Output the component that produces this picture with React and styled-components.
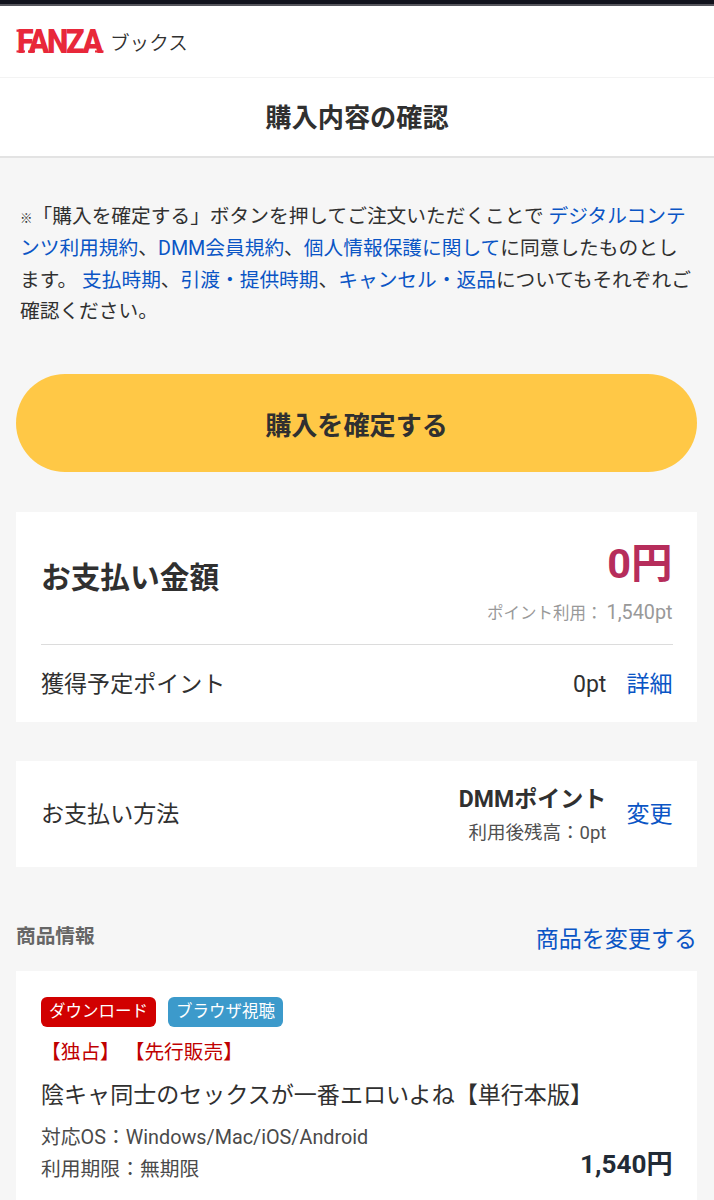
import React from 'react'
import styled, { createGlobalStyle } from 'styled-components'

const badges = [
    { id: 1, title: 'ダウンロード', color: '#d10000' },
    { id: 2, title: 'ブラウザ視聴', color: '#3c9acb' }
]

function Header(){
    return (
        <HeaderStyled>
            <svg className="logo" width="90" height="44" viewBox="0 0 90 44">
                <text x="1" y="33.5" textLength="84" lengthAdjust="spacingAndGlyphs">FANZA</text>
                <rect x="0.5" y="10.5" width="5" height="2.3" />
                <rect x="0.5" y="31.4" width="8.5" height="2.1" />
                <rect x="12" y="31.4" width="7" height="2.1" />
                <rect x="79" y="31.4" width="8.5" height="2.1" />
            </svg>
            <span>ブックス</span>
        </HeaderStyled>
    )
}

function Payment(){
    return (
        <Card $height={209.5}>
            <TotalRow>
                <h2>お支払い金額</h2>
                <div className="price">
                    <strong>0円</strong>
                    <p>ポイント利用： <span>1,540pt</span></p>
                </div>
            </TotalRow>
            <Row $height={79}>
                <span>獲得予定ポイント</span>
                <RowEnd>
                    <span>0pt</span>
                    <Link>詳細</Link>
                </RowEnd>
            </Row>
        </Card>
    )
}

function Method(){
    return (
        <Card $height={106}>
            <Row $height={108}>
                <span>お支払い方法</span>
                <RowEnd>
                    <MethodStyled>
                        <strong>DMMポイント</strong>
                        <span>利用後残高：0pt</span>
                    </MethodStyled>
                    <Link>変更</Link>
                </RowEnd>
            </Row>
        </Card>
    )
}

function Product(){
    return (
        <Card $height={229}>
            <Badges>
                {badges.map((badge) => {
                    return <Badge key={badge.id} $color={badge.color}>{badge.title}</Badge>
                })}
            </Badges>
            <Campaign>【独占】 【先行販売】</Campaign>
            <ProductTitle>陰キャ同士のセックスが一番エロいよね【単行本版】</ProductTitle>
            <Detail>
                <div>
                    <p>対応OS：Windows/Mac/iOS/Android</p>
                    <p>利用期限：無期限</p>
                </div>
                <strong>1,540円</strong>
            </Detail>
        </Card>
    )
}

function App(){

    return (
        <>
            <GlobalStyle />
            <StatusBar />
            <Header />
            <PageTitle>購入内容の確認</PageTitle>
            <Main>
                <Notice>
                    <span className="mark">※</span>「購入を確定する」ボタンを押してご注文いただくことで <Link>デジタルコンテンツ利用規約</Link>、<Link>DMM会員規約</Link>、<Link>個人情報保護に関して</Link>に同意したものとします。 <Link>支払時期</Link>、<Link>引渡・提供時期</Link>、<Link>キャンセル・返品</Link>についてもそれぞれご確認ください。
                </Notice>
                <Submit>購入を確定する</Submit>
                <Payment />
                <Method />
                <SectionHead>
                    <h3>商品情報</h3>
                    <Link>商品を変更する</Link>
                </SectionHead>
                <Product />
            </Main>
        </>
    )
}

const GlobalStyle = createGlobalStyle`
    * {
        box-sizing: border-box;
        margin: 0;
        padding: 0;
    }

    body {
        height: 1200px;
        overflow: hidden;
        background: #f6f6f6;
        color: #303030;
        font-family: Roboto, 'Noto Sans CJK JP', sans-serif;
        font-size: 23.05px;
        text-spacing-trim: space-all;
    }
`;

const StatusBar = styled.div`
    height: 6px;
    background: #11121c;
    border-bottom: 2px solid #55555c;
`;

const HeaderStyled = styled.header`
    display: flex;
    align-items: center;
    height: 72px;
    padding: 0 16px 2px;
    background: #fff;
    border-bottom: 1px solid #f3f3f3;

    .logo {
        margin-right: 4px;
        fill: #e8283a;
        overflow: visible;
    }

    text {
        font-weight: 900;
        font-size: 32.3px;
        letter-spacing: -2.4px;
    }

    span {
        padding-top: 6px;
        font-size: 19.6px;
        font-weight: 350;
        line-height: 30px;
    }
`;

const PageTitle = styled.h1`
    height: 80px;
    background: #fff;
    border-bottom: 2px solid #e3e3e3;
    font-size: 26.2px;
    line-height: 80px;
    text-align: center;
`;

const Main = styled.main`
    padding: 43px 17px 0 16px;
`;

const Link = styled.a`
    color: #0a55c5;
`;

const Notice = styled.p`
    padding: 0 1px 0 4px;
    font-size: 19.72px;
    line-height: 31.8px;

    .mark {
        font-size: 12.5px;
        font-weight: 700;
        line-height: 1;
    }
`;

const Submit = styled.button`
    display: block;
    width: 100%;
    height: 98px;
    margin: 46px 0 40px;
    padding-top: 2px;
    border: 0;
    border-radius: 49px;
    background: #ffc846;
    color: #303030;
    font-family: inherit;
    font-size: 26.1px;
    font-weight: 700;
`;

const Card = styled.section`
    height: ${(props) => props.$height}px;
    margin-bottom: 39.5px;
    padding: 0 24.5px 0 25px;
    background: #fff;

    &:last-child {
        margin-bottom: 0;
    }
`;

const TotalRow = styled.div`
    display: flex;
    align-items: center;
    justify-content: space-between;
    height: 133px;
    border-bottom: 1px solid #dcdcdc;

    h2 {
        font-size: 29.7px;
        line-height: 40px;
    }

    .price {
        padding-top: 12px;
        text-align: right;
    }

    strong {
        display: block;
        color: #b62d5b;
        font-size: 41.5px;
        line-height: 58px;
    }

    p {
        color: #999;
        font-size: 16.5px;
        line-height: 40px;
    }

    p span {
        font-size: 19.8px;
    }
`;

const Row = styled.div`
    display: flex;
    align-items: center;
    justify-content: space-between;
    height: ${(props) => props.$height}px;
    line-height: 34px;
`;

const RowEnd = styled.div`
    display: flex;
    align-items: center;
    gap: 20px;
`;

const MethodStyled = styled.div`
    display: flex;
    flex-direction: column;
    align-items: flex-end;
    padding-top: 1px;

    span {
        color: #505050;
        font-size: 18.5px;
        line-height: 32px;
    }
`;

const SectionHead = styled.div`
    display: flex;
    align-items: center;
    justify-content: space-between;
    height: 64.5px;
    padding-bottom: 4px;

    h3 {
        padding-bottom: 5px;
        color: #666;
        font-size: 19.7px;
    }
`;

const Badges = styled.div`
    display: flex;
    gap: 12px;
    padding-top: 26px;
`;

const Badge = styled.span`
    width: 115px;
    height: 30px;
    border-radius: 6px;
    background: ${(props) => props.$color};
    color: #fff;
    font-size: 16.5px;
    line-height: 29px;
    text-align: center;
`;

const Campaign = styled.p`
    margin-top: 10px;
    color: #c00000;
    font-size: 19.7px;
    line-height: 32px;
`;

const ProductTitle = styled.p`
    margin-top: 8px;
    line-height: 38px;
`;

const Detail = styled.div`
    display: flex;
    align-items: flex-end;
    justify-content: space-between;
    margin-top: 7px;

    p {
        color: #4a4a4a;
        font-size: 19.8px;
        line-height: 31.5px;
    }

    strong {
        padding-bottom: 2px;
        color: #222b36;
        font-size: 26.1px;
        line-height: 38px;
    }
`;

export default App;
